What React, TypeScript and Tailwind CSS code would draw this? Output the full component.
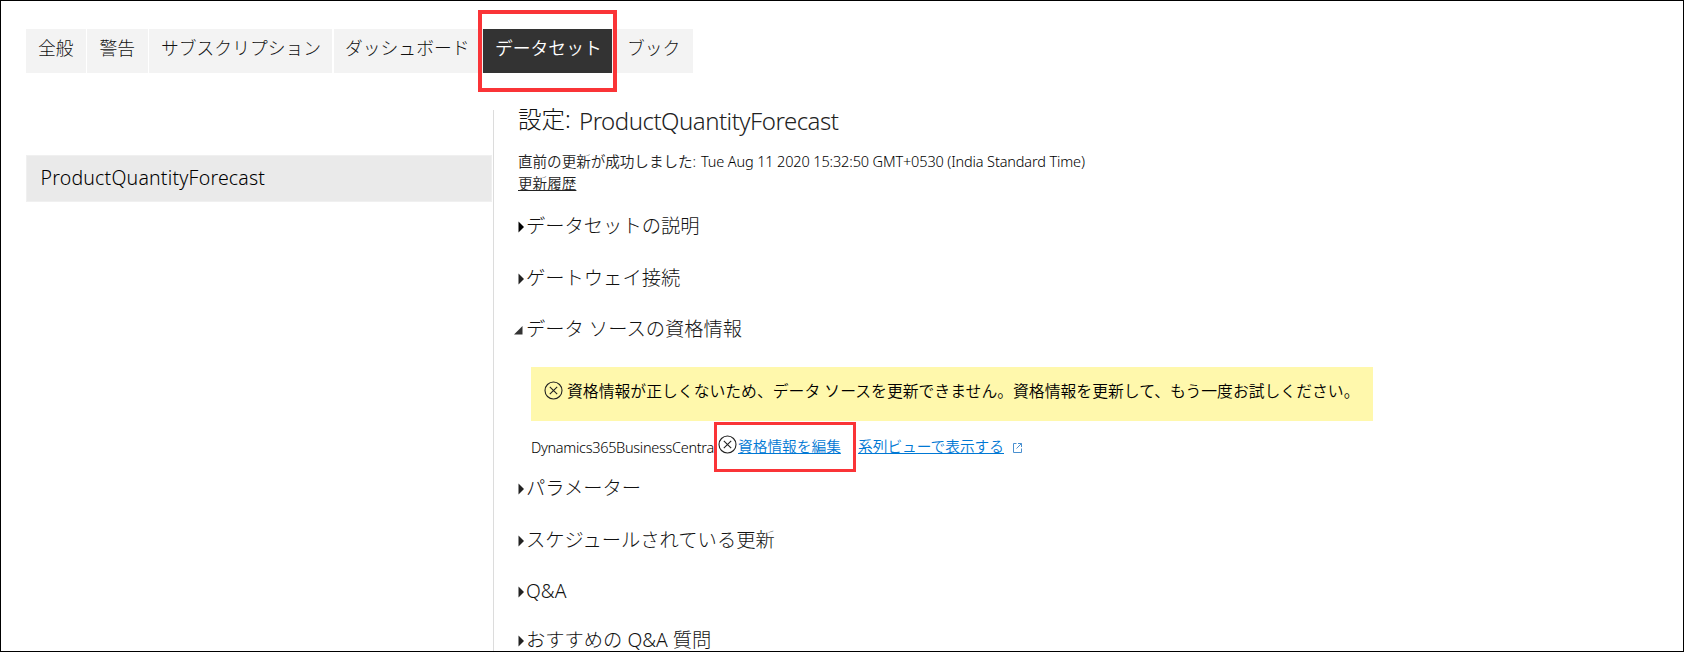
import React from "react";

const tabs = [
  { label: "全般", box: "w-[60px] mr-px pl-[12px]" },
  { label: "警告", box: "w-[61px] mr-px pl-[12.5px]" },
  { label: "サブスクリプション", box: "w-[183px] mr-[2px] pl-[12px]" },
  { label: "ダッシュボード", box: "w-[149px] pl-[11px]" },
  { label: "データセット", box: "w-[129px] pl-[12px]", active: true },
  { label: "ブック", box: "w-[81px] pl-[15px]" },
];

function ErrorIcon() {
  return (
    <svg className="size-[19px] shrink-0" viewBox="0 0 19 19" fill="none" stroke="#222" strokeWidth="1.1">
      <circle cx="9.5" cy="9.5" r="8.5" />
      <path d="M5.8 5.8l7.4 7.4M13.2 5.8l-7.4 7.4" />
    </svg>
  );
}

function Section({ title, height, open, dark }: { title: string; height: string; open?: boolean; dark?: boolean }) {
  return (
    <div className={`flex ${height} items-start`}>
      <div className="flex h-7 items-center">
        {open ? (
          <svg className="-ml-[4px] mt-[3px] mr-[3px] h-[9px] w-[9px]" viewBox="0 0 9 9">
            <path d="M8.5 0v8.5H0z" fill="#333" />
          </svg>
        ) : (
          <svg className="mt-[2px] mr-[1px] h-[12px] w-[7px]" viewBox="0 0 7 12">
            <path d="M0.5 0.5L6 6L0.5 11.5z" fill={dark ? "#000" : "#222"} />
          </svg>
        )}
        <h2 className="text-[19.3px] leading-7 font-light whitespace-nowrap text-[#111]">{title}</h2>
      </div>
    </div>
  );
}

export default function App() {
  return (
    <div className="relative flex h-[652px] w-[1684px] flex-col overflow-hidden border border-black bg-white font-['Noto_Sans','Noto_Sans_CJK_JP',sans-serif] font-[350] text-[#222]">
      <nav className="mt-[28px] ml-[25px] flex h-11">
        {tabs.map((t) => (
          <div
            key={t.label}
            className={`${t.box} shrink-0 text-[17.8px] leading-[38px] whitespace-nowrap ${
              t.active ? "bg-[#333] text-white" : "bg-[#f3f3f3] font-light text-[#111]"
            }`}
          >
            {t.label}
          </div>
        ))}
      </nav>

      <div className="flex flex-1">
        <aside className="ml-[25px] w-[467px] shrink-0 pt-[82px]">
          <div className="h-[47px] w-[466px] border border-[#f0f0f0] bg-[#eaeaea] pl-[13.5px] text-[19.5px] leading-[44px] tracking-[0.2px] text-black">
            ProductQuantityForecast
          </div>
        </aside>

        <main className="mt-[37px] h-[541px] flex-1 border-l border-[#dcdcdc] pl-6">
          <div className="flex h-[40px] items-start">
            <span className="w-[61px] text-[23.5px] leading-[18px] font-light text-[#111]">設定:</span>
            <h1 className="text-[24px] leading-[22px] tracking-[-0.5px]">ProductQuantityForecast</h1>
          </div>
          <div className="flex h-[22px] text-[14.6px] leading-[22px] whitespace-nowrap">
            <span className="w-[183px] tracking-[-0.05px]">直前の更新が成功しました:</span>
            <span className="text-[14.5px] tracking-[-0.14px] text-black">Tue Aug 11 2020 15:32:50 GMT+0530 (India Standard Time)</span>
          </div>
          <div className="h-[40px] text-[14.6px] leading-[22px] underline">更新履歴</div>

          <Section title="データセットの説明" height="h-[52px]" dark />
          <Section title="ゲートウェイ接続" height="h-[51px]" />
          <Section title="データ ソースの資格情報" height="h-[52px]" open />

          <div className="ml-[13px] flex h-[54px] w-[842px] items-start gap-[4px] bg-[#fff8ac] pt-[14px] pl-[13px] text-[15.84px] whitespace-nowrap text-black">
            <ErrorIcon />
            <span className="leading-[20px]">
              資格情報が正しくないため、データ ソースを更新できません。資格情報を更新して、もう一度お試しください。
            </span>
          </div>

          <div className="ml-[13px] flex h-[53px] items-start pt-[14px] text-[14.7px] leading-[22px] whitespace-nowrap">
            <span className="w-[187px] pt-px text-[14.5px] tracking-[-0.3px] text-black">Dynamics365BusinessCentra</span>
            <ErrorIcon />
            <a className="ml-[1px] w-[120px] text-[#0078d4]">
              <span className="underline">資格情報を編集</span>
            </a>
            <a className="text-[#0078d4] underline">系列ビューで表示する</a>
            <svg className="mt-[7px] ml-[8px] size-[11px]" viewBox="0 0 11 11" fill="none" stroke="#4a90d0" strokeWidth="1">
              <path d="M4.5 1.5H1.5V10.5H9.5V6.5M6 1.5H9.5V5M9.5 1.5L4.5 6.5" />
            </svg>
          </div>

          <Section title="パラメーター" height="h-[52px]" />
          <Section title="スケジュールされている更新" height="h-[51px]" />
          <Section title="Q&A" height="h-[49px]" />
          <Section title="おすすめの Q&A 質問" height="h-[28px]" />
        </main>
      </div>

      <div className="absolute top-[9px] left-[477px] h-[82px] w-[139px] border-[4px] border-[#fa3437]" />
      <div className="absolute top-[421px] left-[713px] h-[50px] w-[142px] border-[3px] border-[#fa3437]" />
    </div>
  );
}
